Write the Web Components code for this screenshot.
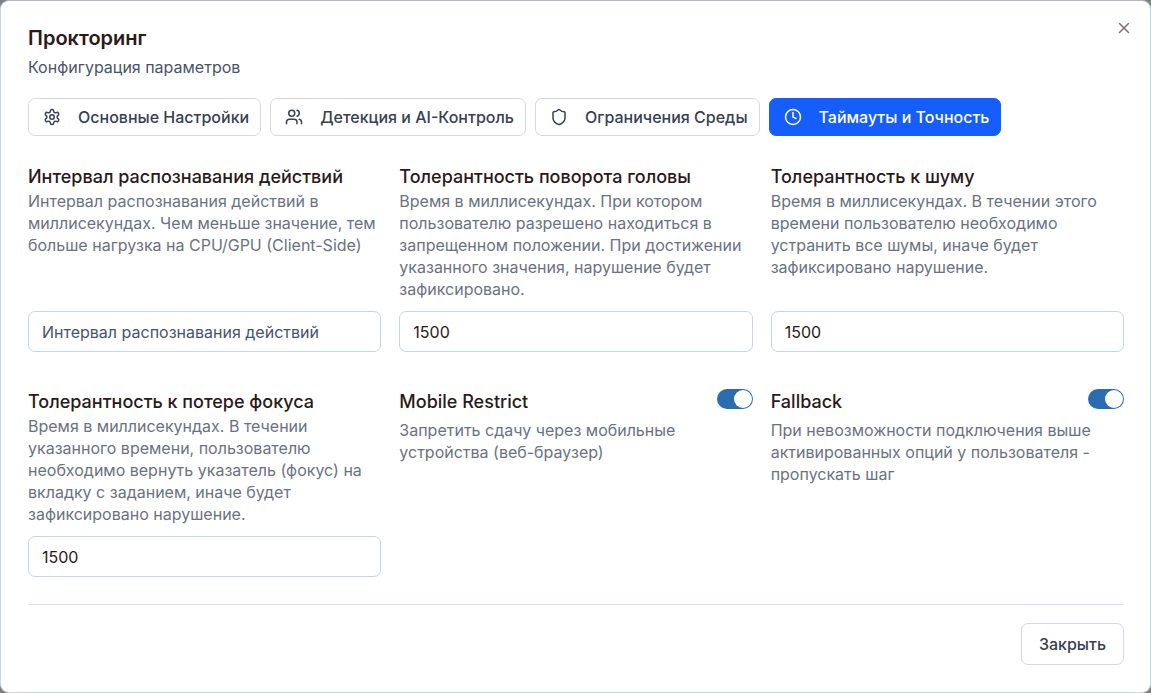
<!DOCTYPE html>
<html lang="ru">
<head>
<meta charset="utf-8">
<title>Прокторинг</title>
<style>
  body {
    margin: 0;
    background: #808080;
    color: #2a1a1a;
    font: 400 16px/22px Inter, "Noto Sans", sans-serif;
  }
</style>
</head>
<body>
<settings-dialog>
  <span slot="title">Прокторинг</span>
  <span slot="subtitle">Конфигурация параметров</span>
  <tab-button slot="tabs" icon="gear">Основные Настройки</tab-button>
  <tab-button slot="tabs" icon="users">Детекция и AI-Контроль</tab-button>
  <tab-button slot="tabs" icon="shield">Ограничения Среды</tab-button>
  <tab-button slot="tabs" icon="clock" active>Таймауты и Точность</tab-button>

  <number-field label="Интервал распознавания действий" placeholder="Интервал распознавания действий">Интервал распознавания действий в миллисекундах. Чем меньше значение, тем больше нагрузка на CPU/GPU (Client-Side)</number-field>
  <number-field label="Толерантность поворота головы" value="1500">Время в миллисекундах. При котором пользователю разрешено находиться в запрещенном положении. При достижении указанного значения, нарушение будет зафиксировано.</number-field>
  <number-field label="Толерантность к шуму" value="1500">Время в миллисекундах. В течении этого времени пользователю необходимо устранить все шумы, иначе будет зафиксировано нарушение.</number-field>
  <number-field label="Толерантность к потере фокуса" value="1500">Время в миллисекундах. В течении указанного времени, пользователю необходимо вернуть указатель (фокус) на вкладку с заданием, иначе будет зафиксировано нарушение.</number-field>
  <switch-field label="Mobile Restrict" checked>Запретить сдачу через мобильные устройства (веб-браузер)</switch-field>
  <switch-field label="Fallback" checked>При невозможности подключения выше активированных опций у пользователя - пропускать шаг</switch-field>

  <outline-button slot="actions">Закрыть</outline-button>
</settings-dialog>

<script>
const ICONS = {
  gear: '<path d="M12.22 2h-.44a2 2 0 0 0-2 2v.18a2 2 0 0 1-1 1.73l-.43.25a2 2 0 0 1-2 0l-.15-.08a2 2 0 0 0-2.73.73l-.22.38a2 2 0 0 0 .73 2.73l.15.1a2 2 0 0 1 1 1.72v.51a2 2 0 0 1-1 1.74l-.15.09a2 2 0 0 0-.73 2.73l.22.38a2 2 0 0 0 2.73.73l.15-.08a2 2 0 0 1 2 0l.43.25a2 2 0 0 1 1 1.73V20a2 2 0 0 0 2 2h.44a2 2 0 0 0 2-2v-.18a2 2 0 0 1 1-1.73l.43-.25a2 2 0 0 1 2 0l.15.08a2 2 0 0 0 2.73-.73l.22-.39a2 2 0 0 0-.73-2.73l-.15-.08a2 2 0 0 1-1-1.74v-.5a2 2 0 0 1 1-1.74l.15-.09a2 2 0 0 0 .73-2.73l-.22-.38a2 2 0 0 0-2.73-.73l-.15.08a2 2 0 0 1-2 0l-.43-.25a2 2 0 0 1-1-1.73V4a2 2 0 0 0-2-2z"/><circle cx="12" cy="12" r="3"/>',
  users: '<path d="M16 21v-2a4 4 0 0 0-4-4H6a4 4 0 0 0-4 4v2"/><circle cx="9" cy="7" r="4"/><path d="M22 21v-2a4 4 0 0 0-3-3.87"/><path d="M16 3.13a4 4 0 0 1 0 7.75"/>',
  shield: '<path d="M20 13c0 5-3.5 7.5-7.66 8.95a1 1 0 0 1-.67-.01C7.5 20.5 4 18 4 13V6a1 1 0 0 1 1-1c2 0 4.5-1.2 6.24-2.72a1.17 1.17 0 0 1 1.52 0C14.51 3.81 17 5 19 5a1 1 0 0 1 1 1z"/>',
  clock: '<circle cx="12" cy="12" r="10"/><path d="M12 6v6l4 2"/>',
  close: '<path d="M18 6 6 18"/><path d="m6 6 12 12"/>'
};
const icon = (name, size) =>
  `<svg width="${size}" height="${size}" viewBox="0 0 24 24" fill="none" stroke="currentColor" stroke-width="2" stroke-linecap="round" stroke-linejoin="round" aria-hidden="true">${ICONS[name]}</svg>`;

class TabButton extends HTMLElement {
  constructor() {
    super();
    this.attachShadow({ mode: 'open' }).innerHTML = `
      <style>
        :host { display: block; }
        button {
          box-sizing: border-box; display: flex; align-items: center; gap: 17px;
          height: 38px; padding: 0 11px 0 14px; border: 1px solid #d5d8e0; border-radius: 7px;
          background: #fff; color: #364153; font: 500 16px/22px Inter, "Noto Sans", sans-serif;
          white-space: nowrap; cursor: pointer;
        }
        svg { display: block; flex: none; }
        :host([active]) button { background: #155dfc; border-color: #155dfc; color: #fff; }
      </style>
      <button type="button" aria-pressed="${this.hasAttribute('active')}">${icon(this.getAttribute('icon'), 18)}<slot></slot></button>`;
  }
}

class NumberField extends HTMLElement {
  constructor() {
    super();
    this.attachShadow({ mode: 'open' }).innerHTML = `
      <style>
        :host { display: flex; flex-direction: column; min-width: 0; }
        label { font-weight: 500; font-size: 18px; line-height: 26px; }
        p { margin: 0 0 11px; flex: 1; color: #6a7282; }
        input {
          box-sizing: border-box; width: 100%; height: 41px; padding: 0 13px;
          border: 1px solid #cad5e2; border-radius: 7px; background: #fff; color: inherit;
          font: inherit; outline: none;
        }
        input::placeholder { color: #45556c; opacity: 1; }
      </style>
      <label for="value"></label>
      <p id="hint"><slot></slot></p>
      <input id="value" type="text" inputmode="numeric" aria-describedby="hint">`;
    const input = this.shadowRoot.querySelector('input');
    this.shadowRoot.querySelector('label').textContent = this.getAttribute('label');
    input.placeholder = this.getAttribute('placeholder') || '';
    input.value = this.getAttribute('value') || '';
  }
}

class SwitchField extends HTMLElement {
  constructor() {
    super();
    this.attachShadow({ mode: 'open' }).innerHTML = `
      <style>
        :host { display: block; min-width: 0; }
        .head { display: flex; justify-content: space-between; align-items: flex-start; margin-bottom: 4px; }
        label { font-weight: 500; font-size: 18px; line-height: 26px; }
        p { margin: 0; color: #6a7282; }
        input {
          appearance: none; box-sizing: border-box; display: flex; width: 36px; height: 20px;
          margin: 0; padding: 1px; border-radius: 10px; background: #2b6cb0; cursor: pointer;
        }
        input::before { content: ""; width: 18px; height: 18px; border-radius: 50%; background: #fff; }
        input:checked { justify-content: flex-end; }
        input:not(:checked) { background: #cad5e2; }
      </style>
      <div class="head">
        <label for="toggle"></label>
        <input id="toggle" type="checkbox" role="switch" aria-describedby="hint">
      </div>
      <p id="hint"><slot></slot></p>`;
    this.shadowRoot.querySelector('label').textContent = this.getAttribute('label');
    this.shadowRoot.querySelector('input').checked = this.hasAttribute('checked');
  }
}

class OutlineButton extends HTMLElement {
  constructor() {
    super();
    this.attachShadow({ mode: 'open' }).innerHTML = `
      <style>
        :host { display: block; }
        button {
          box-sizing: border-box; height: 42px; padding: 0 17px;
          border: 1px solid #d5d8e0; border-radius: 7px; background: #fff; color: #364153;
          font: 500 16px/22px Inter, "Noto Sans", sans-serif; cursor: pointer;
        }
      </style>
      <button type="button"><slot></slot></button>`;
  }
}

class SettingsDialog extends HTMLElement {
  constructor() {
    super();
    this.attachShadow({ mode: 'open' }).innerHTML = `
      <style>
        :host { display: block; }
        section {
          position: relative; box-sizing: border-box; min-height: 100vh; padding: 24px 26px 26px 27px;
          border: 1px solid #cad5e2; border-top-color: #b0b8c4; border-radius: 9px; background: #fff;
        }
        h2 { margin: 0; font-weight: 600; font-size: 20px; line-height: 26px; }
        .subtitle { margin: 5px 0 0; color: #45556c; }
        nav { display: flex; flex-wrap: wrap; gap: 9px; margin-top: 20px; }
        .grid {
          display: grid; grid-template-columns: repeat(3, minmax(0, 1fr));
          column-gap: 18px; row-gap: 37px; margin-top: 28px;
        }
        footer {
          display: flex; justify-content: flex-end; margin-top: 27px; padding-top: 18px;
          border-top: 1px solid #dbe3ee;
        }
        .close {
          position: absolute; top: 18px; right: 17px; padding: 0; border: 0;
          background: none; color: #7d7070; cursor: pointer;
        }
        .close svg { display: block; }
      </style>
      <section role="dialog" aria-labelledby="title">
        <h2 id="title"><slot name="title"></slot></h2>
        <p class="subtitle"><slot name="subtitle"></slot></p>
        <nav><slot name="tabs"></slot></nav>
        <div class="grid"><slot></slot></div>
        <footer><slot name="actions"></slot></footer>
        <button class="close" type="button" aria-label="Закрыть окно">${icon('close', 18)}</button>
      </section>`;
  }
}

customElements.define('tab-button', TabButton);
customElements.define('number-field', NumberField);
customElements.define('switch-field', SwitchField);
customElements.define('outline-button', OutlineButton);
customElements.define('settings-dialog', SettingsDialog);
</script>
</body>
</html>
